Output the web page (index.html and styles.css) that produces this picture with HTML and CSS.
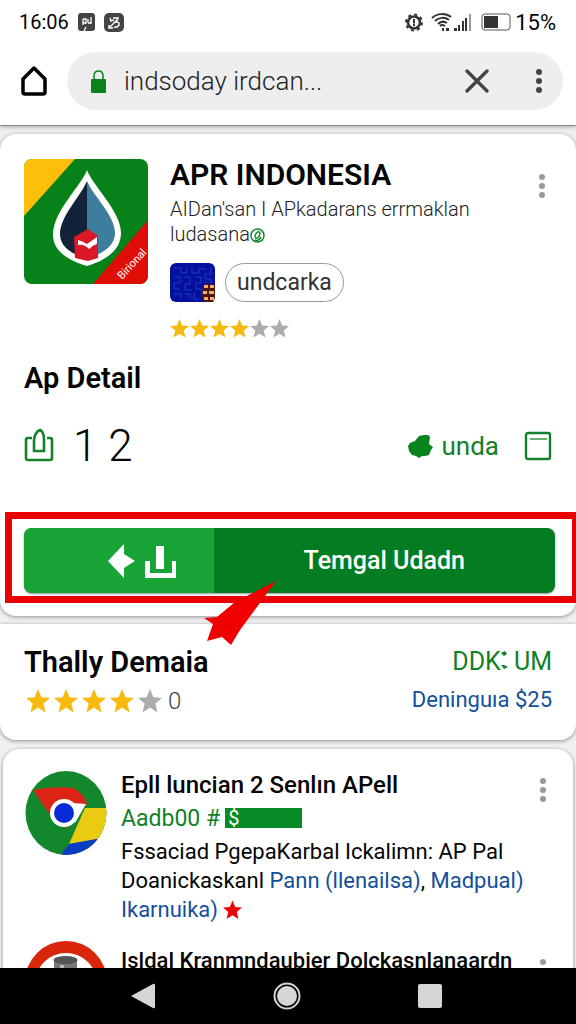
FILE: index.html
```
<!DOCTYPE html>
<html lang="id">
<head>
  <meta charset="UTF-8" />
  <title>APR INDONESIA</title>
  <meta name="viewport" content="width=device-width, initial-scale=1" />
  <link rel="stylesheet" href="styles.css">
</head>
<body>
  <!-- shared shapes -->
  <svg class="defs" width="0" height="0" aria-hidden="true">
    <symbol id="star" viewBox="0 0 24 24"><path d="M12 0l3.400 8.300 8.600.6-6.600 5.700 2.100 8.900L12 18.600 4.500 23.500l2.100-8.900L0 8.900l8.600-.6z"/></symbol>
    <symbol id="dots" viewBox="0 0 8 26"><circle cx="4" cy="4" r="3"/><circle cx="4" cy="13" r="3"/><circle cx="4" cy="22" r="3"/></symbol>
  </svg>

  <header class="header">
    <div class="status">
      <span class="clock">16:06</span>
      <svg class="status-app" width="17" height="19" viewBox="0 0 17 19">
        <rect width="17" height="18" rx="3" fill="#444"/>
        <path d="M5 12V6m0 0h3v4H5M10 10V6M10 10h3M13 4v7M6 18l2-4" fill="none" stroke="#fff" stroke-width="1.300"/>
      </svg>
      <svg class="status-app" width="20" height="19" viewBox="0 0 20 19">
        <rect width="20" height="19" rx="5" fill="#444"/>
        <path d="M6 5l1 3 3-1M6 14l8-8M9 5h5l-2 4q4 0 3 3-2 3-5 2M5 12v3h4" fill="none" stroke="#fff" stroke-width="1.400"/>
      </svg>
      <span class="spacer"></span>
      <svg class="alarm" width="18" height="19" viewBox="0 0 18 19">
        <circle cx="9" cy="9.500" r="8" fill="none" stroke="#333" stroke-width="2" stroke-dasharray="3 3.280"/>
        <circle cx="9" cy="9.500" r="6" fill="none" stroke="#333" stroke-width="2.600"/>
        <path d="M9 6v4.500M9 11v2" stroke="#333" stroke-width="2"/>
      </svg>
      <svg width="42" height="20" viewBox="0 0 42 20">
        <g fill="none" stroke="#333" stroke-width="2">
          <path d="M1 6C6 1 15 1 20 5M4 9c4-4 10-4 14-1M7 12c3-3 6-3 9-1M9 14c2-2 3-1 5 0"/>
        </g>
        <path d="M11 16h2v3h-2zM15 16h3v3h-3zM23 16h3v3h-3zM27 13h2v6h-2zM31 9h2v10h-2zM34 6h2v13h-2z" fill="#333"/>
        <path d="M38 2h2v17h-2z" fill="#999"/>
      </svg>
      <svg class="battery" width="30" height="18" viewBox="0 0 30 18">
        <rect x="1" y="1" width="28" height="16" rx="3" fill="#fff" stroke="#555"/>
        <path d="M3 3h14v12H3z" fill="#333"/>
      </svg>
      <span class="clock percent">15%</span>
    </div>

    <div class="toolbar">
      <button class="icon-btn" aria-label="Home">
        <svg width="26" height="30" viewBox="0 0 26 30"><path d="M13 2L2 13v13q0 2 2 2h18q2 0 2-2V13z" fill="none" stroke="#000" stroke-width="3.500" stroke-linejoin="round"/></svg>
      </button>
      <div class="address">
        <svg width="17" height="23" viewBox="0 0 17 23">
          <path d="M4 10V6q0-5 4.500-5T13 6v4" fill="none" stroke="#08821a" stroke-width="1.500"/>
          <rect x="1" y="9" width="15" height="14" rx="1" fill="#08821a"/>
        </svg>
        <input class="url" type="text" aria-label="Address" value="indsoday irdcan...">
        <button class="icon-btn" aria-label="Stop">
          <svg width="24" height="24" viewBox="0 0 24 24"><path d="M2 2l20 20M22 2L2 22" stroke="#444" stroke-width="3.300" stroke-linecap="round"/></svg>
        </button>
        <button class="icon-btn dark-dots" aria-label="Menu"><svg class="dots"><use href="#dots"/></svg></button>
      </div>
    </div>
  </header>

  <main class="page">
    <section class="card app-card">
      <div class="app">
        <svg class="app-icon" viewBox="0 0 124 125">
          <defs><clipPath id="tile"><rect width="124" height="125" rx="8"/></clipPath></defs>
          <g clip-path="url(#tile)">
            <path d="M0 0h124v125H0z" fill="#068218"/>
            <path d="M0 0h51L0 57z" fill="#fdbf0a"/>
            <path d="M124 61v64H69z" fill="#df0d06"/>
            <path d="M63 11C58 26 29 52 29 76c0 17 17 26 34 31 17-5 34-15 34-33C97 52 68 26 63 11z" fill="#fff"/>
            <path d="M63 22C57 37 36 57 36 75c0 14 13 20 27 25z" fill="#122238"/>
            <path d="M63 22c6 15 28 34 28 52 0 14-14 21-28 26z" fill="#3d7d9d"/>
            <path d="M50 78l14-8 10 7v22l-10 3-13-3z" fill="#d91925"/>
            <path d="M54 81q4 1 9 4l10-7v7q-4 1-8 5-5-5-11-4z" fill="#fff"/>
            <text x="98" y="121" class="ribbon" transform="rotate(-47 98 121)">Birional</text>
          </g>
        </svg>
        <div class="app-info">
          <h1>APR INDONESIA</h1>
          <p class="sub">AIDan'san I APkadarans errmaklan ludasana<svg class="seal" width="15" height="15" viewBox="0 0 15 15"><g fill="none" stroke="#118a2a" stroke-width="1.500"><circle cx="7.500" cy="7.500" r="6.500"/><ellipse cx="7.500" cy="7" rx="2" ry="3.500" transform="rotate(25 7.500 7)"/><path d="M5 12c2 1 5 0 6-3"/></g></svg></p>
          <div class="tags">
            <svg width="46" height="40" viewBox="0 0 46 40">
              <rect width="45" height="39" rx="6" fill="#05109c"/>
              <path d="M4 5h7v5h6V4M22 3v7h7V6h7M41 4v7h-6v5h6v6M4 14h6v6H4v6h6M14 14h6v7h-5v6h7M25 14h6v6h-5v6h6v7M4 31h7v4M15 31h5v5M24 30v6h5M36 18v4" fill="none" stroke="#1c3bd0"/>
              <path d="M33 22q7-3 12 1v12l-2 4h-8l-3-4z" fill="#4c1805"/>
              <path d="M34 22h4v3h-4zM40 22h4v3h-4zM33 28h4v3h-4zM39 28h5v3h-5zM34 34h4v3h-4zM40 34h4v3h-4z" fill="#f3ad70"/>
            </svg>
            <button class="chip">undcarka</button>
          </div>
          <div class="stars small" role="img" aria-label="4 of 6 stars">
            <svg><use href="#star"/></svg><svg><use href="#star"/></svg><svg><use href="#star"/></svg><svg><use href="#star"/></svg><svg class="off"><use href="#star"/></svg><svg class="off"><use href="#star"/></svg>
          </div>
        </div>
        <button class="icon-btn more" aria-label="More"><svg class="dots"><use href="#dots"/></svg></button>
      </div>

      <h2 class="detail-title">Ap Detail</h2>
      <div class="detail">
        <svg width="30" height="36" viewBox="0 0 30 36">
          <path d="M8 10H4q-2 0-2 2v18q0 2 2 2h22q2 0 2-2V12q0-2-2-2h-3M10 23V12q1-8 6-10 4 2 4 9v12z" fill="none" stroke="#12812a" stroke-width="2.600"/>
        </svg>
        <span class="count">1 2</span>
        <span class="spacer"></span>
        <svg width="27" height="24" viewBox="0 0 27 24"><path d="M1 12l2-3 5-2 4-5 5-1h4l2 2-1 7 4 3-2 3-2 5-4 1h-3l-3 2-3-2-4-1-3-4z" fill="#07851c"/></svg>
        <span class="unda">unda</span>
        <svg width="28" height="30" viewBox="0 0 28 30">
          <rect x="2" y="2" width="24" height="26" rx="2" fill="none" stroke="#13802b" stroke-width="2.400"/>
          <path d="M6 8h17" stroke="#13802b" stroke-width="1.300"/>
        </svg>
      </div>

      <div class="highlight">
        <button class="download">
          <span class="download-icons">
            <svg width="70" height="36" viewBox="0 0 70 36">
              <path d="M1 18L17 1v10l11 7-11 7v10z" fill="#fff"/>
              <path d="M49 3h8v23h-8zM38 18h5v12h22V18h4v17H38z" fill="#fff"/>
            </svg>
          </span>
          <span class="download-text">Temgal Udadn</span>
        </button>
        <svg class="pointer" width="74" height="66" viewBox="0 0 74 66"><path d="M73 1L32 22 14 37 1 38l9 6-6 17 15-4 9 8 9-15z" fill="#f20000"/></svg>
      </div>
    </section>

    <section class="card rating-card">
      <div>
        <h2>Thally Demaia</h2>
        <div class="stars" role="img" aria-label="4 of 5 stars">
          <svg><use href="#star"/></svg><svg><use href="#star"/></svg><svg><use href="#star"/></svg><svg><use href="#star"/></svg><svg class="off"><use href="#star"/></svg>
          <span>0</span>
        </div>
      </div>
      <div class="price">
        <span class="ddk">DDK<svg width="7" height="20" viewBox="0 0 7 20"><path d="M0 3l4-2 2 3-3 2M0 15l3 4 4-2-4-2z" fill="#118027"/></svg> UM</span>
        <a href="#">Deninguıa $25</a>
      </div>
    </section>

    <section class="card list-card">
      <article class="review">
        <svg class="avatar" viewBox="0 0 82 84">
          <defs><clipPath id="disc"><ellipse cx="41" cy="42" rx="40.500" ry="42"/></clipPath></defs>
          <g clip-path="url(#disc)">
            <path d="M0 0h82v84H0z" fill="#13872b"/>
            <path d="M8 19q20-4 40-2 11 5 14 16L42 57 27 47z" fill="#db2415"/>
            <path d="M60 37h22v30l-38 6z" fill="#e9cc12"/>
            <path d="M44 73l38-7v18H36z" fill="#0a3dc4"/>
            <path d="M48 32l13 1-11 19z" fill="#fff"/>
            <circle cx="39" cy="42" r="14" fill="#fff"/>
            <circle cx="39" cy="42" r="10" fill="#0929d7"/>
          </g>
        </svg>
        <div class="review-body">
          <h3>Epll luncian 2 Senlın APell</h3>
          <p class="code">Aadb00 # <span class="bar">$</span></p>
          <p>Fssaciad PgepaKarbal Ickalimn: AP Pal Doanickaskanl <a href="#">Pann (llenailsa)</a>, <a href="#">Madpual)</a> <a href="#">Ikarnuika)</a> <svg class="red-star" width="19" height="20"><use href="#star"/></svg></p>
        </div>
        <button class="icon-btn more" aria-label="More"><svg class="dots"><use href="#dots"/></svg></button>
      </article>
      <article class="review next">
        <svg class="avatar" viewBox="0 0 82 84">
          <circle cx="41" cy="42" r="41" fill="#d92509"/>
          <circle cx="41" cy="44" r="31" fill="#fff"/>
          <path d="M29 20h23v34H29z" fill="#777"/>
          <ellipse cx="40.500" cy="20" rx="12" ry="4" fill="#555"/>
          <path d="M35 25h4v20h-4z" fill="#bbb"/>
        </svg>
        <div class="review-body">
          <h3>Isldal Kranmndaubier Dolckasnlanaardn</h3>
        </div>
        <button class="icon-btn more" aria-label="More"><svg class="dots"><use href="#dots"/></svg></button>
      </article>
    </section>
  </main>

  <nav class="navbar">
    <button class="icon-btn" aria-label="Back"><svg width="26" height="28" viewBox="0 0 26 28"><path d="M1 14L23 2q2-1 2 1v22q0 2-2 1z" fill="#d6d6d6"/></svg></button>
    <button class="icon-btn" aria-label="Home"><svg width="28" height="28" viewBox="0 0 28 28"><circle cx="14" cy="14" r="12.500" fill="none" stroke="#d6d6d6" stroke-width="2"/><circle cx="14" cy="14" r="10" fill="#d6d6d6"/></svg></button>
    <button class="icon-btn" aria-label="Recent"><svg width="24" height="24" viewBox="0 0 24 24"><rect width="24" height="24" rx="2" fill="#d6d6d6"/></svg></button>
  </nav>
</body>
</html>
```
FILE: styles.css
```
* {
  box-sizing: border-box;
}

body {
  margin: 0;
  height: 100vh;
  display: flex;
  flex-direction: column;
  overflow: hidden;
  background: #f0f0f1;
  color: #050505;
  font-family: Roboto, "Liberation Sans", sans-serif;
  font-size: 22px;
}

h1, h2, h3, p {
  margin: 0;
}

svg {
  display: block;
  flex: none;
}

a {
  color: #124f9c;
  text-decoration: none;
}

.defs {
  position: absolute;
}

.spacer {
  flex: 1;
}

.icon-btn {
  display: flex;
  padding: 0;
  border: 0;
  background: none;
}

.dots {
  width: 8px;
  height: 26px;
  fill: #999;
}

.dark-dots .dots {
  fill: #444;
}

/* top of the screen */
.header {
  flex: none;
  background: #fff;
  border-bottom: 1px solid #888;
  box-shadow: 0 1px 4px rgba(0, 0, 0, 0.3);
}

.status {
  display: flex;
  align-items: center;
  height: 44px;
  padding: 0 20px 0 19px;
}

.clock {
  font-size: 20px;
}

.percent {
  font-size: 22px;
}

.status-app {
  margin-left: 9px;
}

.alarm {
  margin-right: 8px;
}

.battery {
  margin: 0 4px 0 8px;
}

.toolbar {
  display: flex;
  align-items: center;
  gap: 20px;
  padding: 8px 13px 15px 21px;
}

.address {
  flex: 1;
  display: flex;
  align-items: center;
  height: 58px;
  padding: 0 20px 0 23px;
  border-radius: 29px;
  background: #eee;
}

.url {
  flex: 1;
  min-width: 0;
  margin-left: 17px;
  padding: 0;
  border: 0;
  background: none;
  color: #222;
  font: 300 26px Roboto, "Liberation Sans", sans-serif;
}

.dark-dots {
  margin-left: 46px;
}

/* cards */
.page {
  flex: 1;
  min-height: 0;
  overflow: hidden;
  padding-top: 8px;
}

.card {
  background: #fff;
  border-radius: 16px;
  box-shadow: 0 1px 4px rgba(0, 0, 0, 0.4);
}

.app-card {
  margin-bottom: 8px;
  padding: 25px 0 13px;
}

.app {
  display: flex;
  padding: 0 30px 0 24px;
}

.app-icon {
  width: 124px;
  height: 125px;
}

.ribbon {
  fill: #fff;
  font-size: 11px;
}

.app-info {
  flex: 1;
  margin-left: 22px;
}

h1 {
  font-size: 30px;
  font-weight: 600;
  line-height: 32px;
}

.sub {
  max-width: 320px;
  margin-top: 6px;
  color: #222;
  font-size: 20px;
  font-weight: 300;
  line-height: 25px;
}

.seal {
  display: inline-block;
  vertical-align: -2px;
}

.tags {
  display: flex;
  gap: 9px;
  margin-top: 16px;
}

.chip {
  height: 39px;
  padding: 0 11px;
  border: 1px solid #999;
  border-radius: 20px;
  background: #fff;
  color: #333;
  font: 400 23px Roboto, "Liberation Sans", sans-serif;
}

.stars {
  display: flex;
  align-items: center;
  gap: 4px;
  margin-top: 11px;
  padding-left: 2px;
}

.stars svg {
  width: 24px;
  height: 24px;
  fill: #f7b90b;
}

.stars.small {
  gap: 1px;
  margin-top: 16px;
  padding-left: 0;
}

.stars.small svg {
  width: 19px;
  height: 19px;
}

.stars .off {
  fill: #aaacae;
}

.stars span {
  margin-left: 2px;
  color: #444;
  font-size: 24px;
  font-weight: 300;
  line-height: 24px;
}

.more {
  align-self: flex-start;
  margin-top: 14px;
}

h2 {
  font-size: 29px;
  font-weight: 600;
  line-height: 32px;
}

.detail-title {
  margin: 24px 24px 0;
}

.detail {
  display: flex;
  align-items: center;
  height: 60px;
  margin-top: 22px;
  padding: 0 24px;
}

.count {
  margin-left: 19px;
  font-size: 44px;
  font-weight: 300;
}

.unda {
  margin: 0 25px 0 8px;
  color: #13802b;
  font-size: 26px;
}

/* red frame round the download button */
.highlight {
  position: relative;
  margin: 36px 0 0 5px;
  padding: 9px 17px 3px 12px;
  border: 7px solid #ea0000;
  border-right-width: 4px;
}

.download {
  display: grid;
  grid-template-columns: 5fr 9fr;
  width: 100%;
  height: 65px;
  padding: 0;
  border: 0;
  border-radius: 8px;
  overflow: hidden;
  background: #047d22;
  color: #fff;
  font: 500 25px Roboto, "Liberation Sans", sans-serif;
  box-shadow: 0 1px 2px rgba(0, 0, 0, 0.4);
}

.download-icons {
  display: flex;
  align-items: center;
  justify-content: flex-end;
  height: 65px;
  padding-right: 37px;
  background: #18a436;
}

.download-text {
  align-self: center;
  text-align: center;
}

.pointer {
  position: absolute;
  top: 61px;
  left: 191px;
}

.rating-card {
  display: flex;
  justify-content: space-between;
  margin-bottom: 9px;
  padding: 22px 24px 25px;
  border-radius: 0 0 16px 16px;
}

.price {
  display: flex;
  flex-direction: column;
  align-items: flex-end;
  gap: 7px;
  line-height: 32px;
}

.price a {
  line-height: 30px;
}

.ddk {
  color: #118027;
  font-size: 25px;
}

.ddk svg {
  display: inline-block;
}

.list-card {
  margin: 0 3px;
  padding: 22px 26px 0 22px;
}

.review {
  display: flex;
  margin-bottom: 16px;
}

.review .more {
  margin-top: 6px;
}

.avatar {
  width: 82px;
  height: 84px;
}

.review-body {
  flex: 1;
  min-width: 0;
  margin-left: 14px;
  line-height: 29px;
}

h3 {
  font-size: 24px;
  font-weight: 500;
  line-height: 28px;
  white-space: nowrap;
}

.next h3 {
  padding-top: 7px;
  font-size: 22px;
}

.next .more {
  margin-top: 18px;
}

.code {
  display: flex;
  align-items: center;
  gap: 5px;
  height: 38px;
  color: #118027;
  font-size: 23px;
}

.bar {
  width: 77px;
  height: 20px;
  padding-left: 3px;
  background: #078b27;
  color: #fff;
  font-size: 20px;
  line-height: 20px;
}

.red-star {
  display: inline-block;
  vertical-align: -3px;
  fill: #ec0707;
}

.navbar {
  flex: none;
  display: flex;
  align-items: center;
  justify-content: center;
  gap: 117px;
  height: 56px;
  padding-right: 4px;
  background: #000;
}
```
